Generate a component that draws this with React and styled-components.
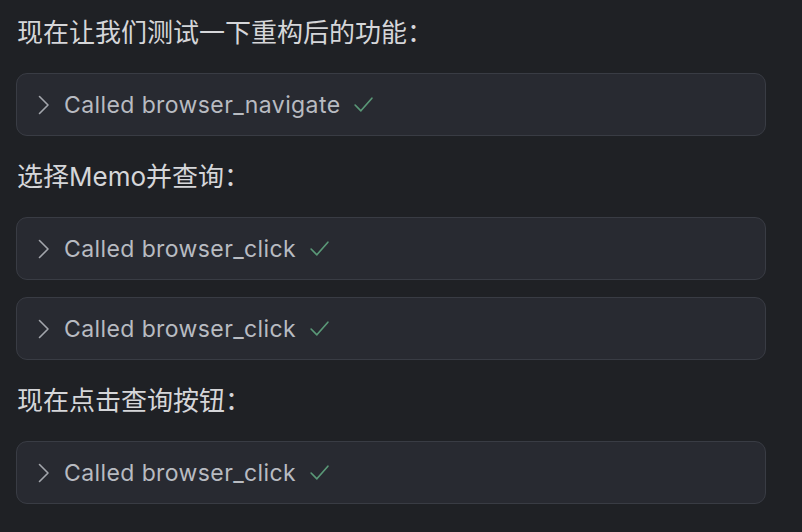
import React from 'react';
import styled, { createGlobalStyle } from 'styled-components';

const GlobalStyle = createGlobalStyle`
  html, body {
    margin: 0;
    padding: 0;
    background: #1f2125;
  }
  body {
    font-family: "Inter", "Noto Sans CJK SC", sans-serif;
    -webkit-font-smoothing: antialiased;
  }
`;

const Page = styled.div`
  width: 802px;
  height: 532px;
  overflow: hidden;
  box-sizing: border-box;
  padding: 15px 36px 0 16px;
  display: flex;
  flex-direction: column;
`;

const Message = styled.p`
  margin: ${p => (p.$first ? '0' : '23px')} 0 22px 1px;
  font-size: 26px;
  line-height: 36px;
  color: #d5d6d9;
  font-family: "Inter", "Noto Sans CJK SC", sans-serif;
`;

const CallList = styled.div`
  display: flex;
  flex-direction: column;
  gap: 17px;
`;

const CallCard = styled.div`
  box-sizing: border-box;
  height: 63px;
  display: flex;
  align-items: center;
  padding: 0 20px 0 21px;
  background: #282a31;
  border: 1.5px solid #393c44;
  border-radius: 11px;
`;

const Chevron = styled.svg`
  width: 12px;
  height: 20px;
  flex-shrink: 0;
  margin-right: 14px;
`;

const CallLabel = styled.span`
  font-size: 23px;
  color: #b8bbc1;
  letter-spacing: 0.4px;
`;

const Check = styled.svg`
  width: 21px;
  height: 21px;
  margin-left: 13px;
  flex-shrink: 0;
`;

const ToolCall = ({ name }) => (
  <CallCard>
    <Chevron viewBox="0 0 12 20">
      <path d="M1.5 1.5 L10 10 L1.5 18.5" fill="none" stroke="#a3a6ac" strokeWidth="1.6" strokeLinecap="round" strokeLinejoin="round" />
    </Chevron>
    <CallLabel>Called {name}</CallLabel>
    <Check viewBox="0 0 20 20">
      <path d="M2 10.5 L7.5 16 L18 4" fill="none" stroke="#5a9877" strokeWidth="1.6" strokeLinecap="round" strokeLinejoin="round" />
    </Check>
  </CallCard>
);

const sections = [
  { text: '现在让我们测试一下重构后的功能：', calls: ['browser_navigate'] },
  { text: '选择Memo并查询：', calls: ['browser_click', 'browser_click'] },
  { text: '现在点击查询按钮：', calls: ['browser_click'] },
];

export default function App() {
  return (
    <>
      <GlobalStyle />
      <Page>
        {sections.map((section, i) => (
          <React.Fragment key={i}>
            <Message $first={i === 0}>{section.text}</Message>
            <CallList>
              {section.calls.map((c, j) => (
                <ToolCall key={j} name={c} />
              ))}
            </CallList>
          </React.Fragment>
        ))}
      </Page>
    </>
  );
}
